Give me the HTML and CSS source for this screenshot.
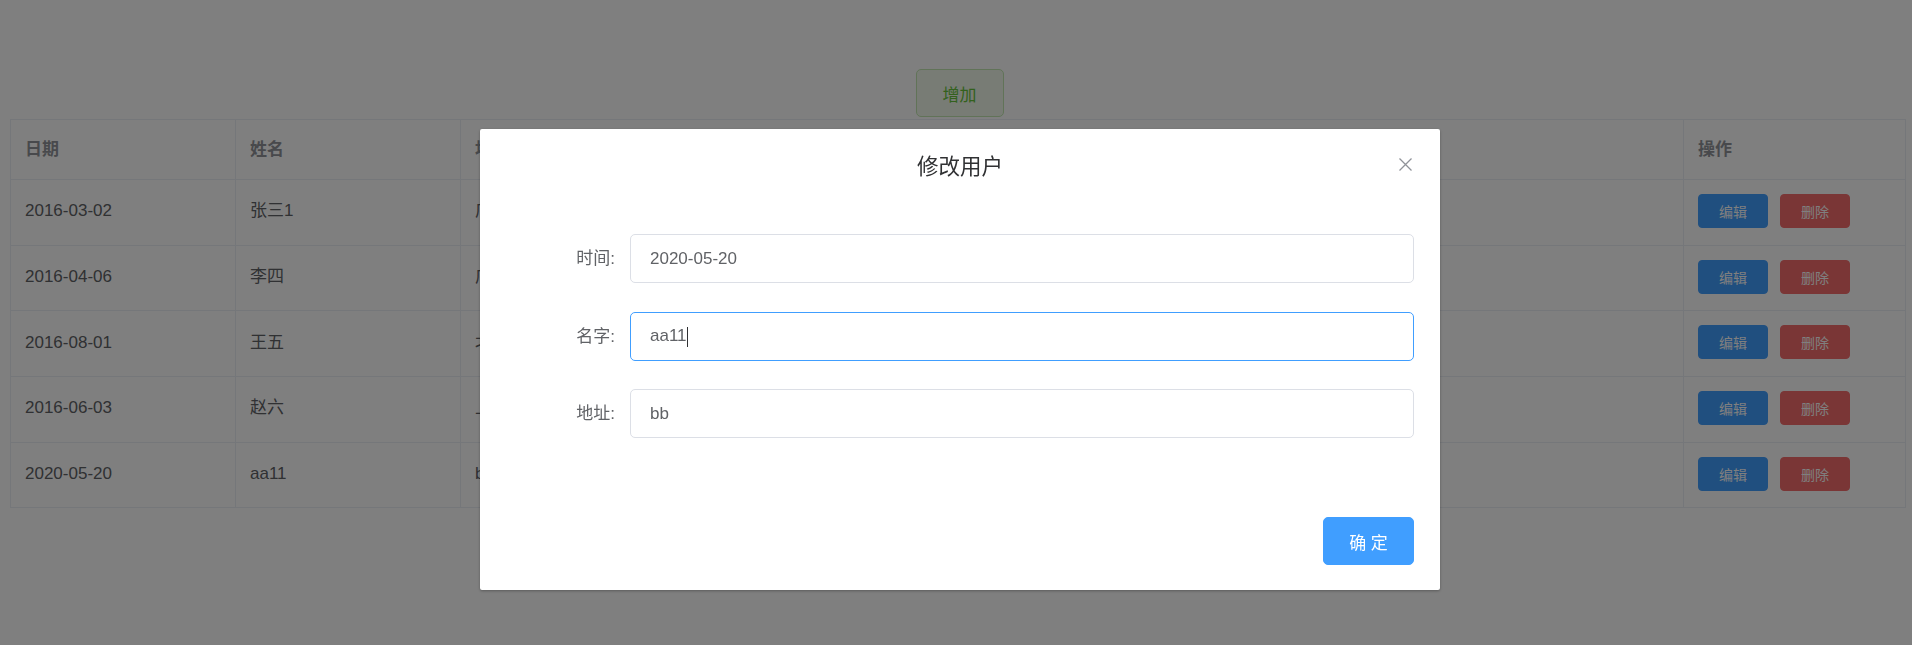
FILE: index.html
```html
<!DOCTYPE html>
<html lang="zh-CN">
<head>
    <meta charset="UTF-8">
    <meta name="viewport" content="width=device-width, initial-scale=1.0">
    <title>用户管理</title>
    <link rel="stylesheet" href="styles.css">
</head>
<body>

    <div class="page">
        <div class="toolbar">
            <button class="btn btn-add">增加</button>
        </div>

        <table class="user-table">
            <colgroup>
                <col class="col-date">
                <col class="col-name">
                <col>
                <col class="col-ops">
            </colgroup>
            <thead>
                <tr>
                    <th>日期</th>
                    <th>姓名</th>
                    <th>地址</th>
                    <th>操作</th>
                </tr>
            </thead>
            <tbody>
                <tr>
                    <td>2016-03-02</td>
                    <td>张三1</td>
                    <td>广州市天河区</td>
                    <td><button class="btn btn-mini btn-edit">编辑</button><button class="btn btn-mini btn-del">删除</button></td>
                </tr>
                <tr>
                    <td>2016-04-06</td>
                    <td>李四</td>
                    <td>广东省深圳市</td>
                    <td><button class="btn btn-mini btn-edit">编辑</button><button class="btn btn-mini btn-del">删除</button></td>
                </tr>
                <tr>
                    <td>2016-08-01</td>
                    <td>王五</td>
                    <td>北京市朝阳区</td>
                    <td><button class="btn btn-mini btn-edit">编辑</button><button class="btn btn-mini btn-del">删除</button></td>
                </tr>
                <tr>
                    <td>2016-06-03</td>
                    <td>赵六</td>
                    <td>上海市普陀区</td>
                    <td><button class="btn btn-mini btn-edit">编辑</button><button class="btn btn-mini btn-del">删除</button></td>
                </tr>
                <tr>
                    <td>2020-05-20</td>
                    <td>aa11</td>
                    <td>bb</td>
                    <td><button class="btn btn-mini btn-edit">编辑</button><button class="btn btn-mini btn-del">删除</button></td>
                </tr>
            </tbody>
        </table>
    </div>

    <!-- 修改用户弹窗 -->
    <div class="mask">
        <div class="dialog">
            <div class="dialog-header">
                <span class="dialog-title">修改用户</span>
                <button class="dialog-close" aria-label="关闭">
                    <svg width="13" height="13" viewBox="0 0 13 13">
                        <path d="M0.5 0.5 L12.5 12.5 M12.5 0.5 L0.5 12.5" stroke="#909399" stroke-width="1.3" fill="none"/>
                    </svg>
                </button>
            </div>
            <div class="dialog-body">
                <form class="form">
                    <div class="form-item">
                        <label class="form-label">时间:</label>
                        <div class="form-content">
                            <input class="input" type="text" value="2020-05-20">
                        </div>
                    </div>
                    <div class="form-item">
                        <label class="form-label">名字:</label>
                        <div class="form-content">
                            <input class="input is-focus" type="text" value="aa11">
                            <span class="caret"></span>
                        </div>
                    </div>
                    <div class="form-item">
                        <label class="form-label">地址:</label>
                        <div class="form-content">
                            <input class="input" type="text" value="bb">
                        </div>
                    </div>
                </form>
            </div>
            <div class="dialog-footer">
                <button class="btn btn-primary">确 定</button>
            </div>
        </div>
    </div>

</body>
</html>
```

FILE: styles.css
```css
* {
    box-sizing: border-box;
}
body {
    margin: 0;
    background-color: #fff;
    font-family: "Liberation Sans", "Noto Sans CJK SC", sans-serif;
    font-size: 17px;
    line-height: 23px;
    color: #606266;
}
.page {
    padding: 0 6px 0 10px;
}
.toolbar {
    padding-top: 69px;
    padding-left: 3px;
    text-align: center;
    line-height: normal;
}
.btn {
    font-family: inherit;
    cursor: pointer;
    border: 1px solid transparent;
    outline: none;
}
.btn-add {
    width: 88px;
    height: 48px;
    margin-bottom: 2px;
    font-size: 17px;
    color: #67c23a;
    background-color: #f0f9eb;
    border-color: #c2e7b0;
    border-radius: 5px;
}

/* tabela */
.user-table {
    width: 1896px;
    table-layout: fixed;
    border-collapse: separate;
    border-spacing: 0;
    border-top: 1px solid #ebeef5;
    border-left: 1px solid #ebeef5;
}
.col-date,
.col-name {
    width: 225px;
}
.col-ops {
    width: 222px;
}
.user-table th,
.user-table td {
    padding: 0 14px;
    text-align: left;
    vertical-align: middle;
    white-space: nowrap;
    overflow: hidden;
    border-right: 1px solid #ebeef5;
    border-bottom: 1px solid #ebeef5;
}
.user-table th {
    height: 60px;
    color: #909399;
    font-weight: bold;
}
.user-table td {
    height: 65.7px;
    padding-bottom: 3px;
}
.btn-mini {
    width: 70px;
    height: 34px;
    padding: 0;
    font-size: 14px;
    color: #fff;
    border-radius: 4px;
    vertical-align: middle;
}
.btn-mini + .btn-mini {
    margin-left: 12px;
}
.btn-edit {
    background-color: #409eff;
    border-color: #409eff;
}
.btn-del {
    background-color: #f56c6c;
    border-color: #f56c6c;
}

/*弹窗 */
.mask {
    position: fixed;
    top: 0;
    left: 0;
    right: 0;
    bottom: 0;
    background-color: rgba(0, 0, 0, 0.5);
    padding-top: 129px;
    padding-left: 480px;
}
.dialog {
    width: 960px;
    background-color: #fff;
    border-radius: 2px;
    box-shadow: 0 1px 3px rgba(0, 0, 0, 0.3);
}
.dialog-header {
    position: relative;
    padding: 24px 24px 12px;
    text-align: center;
}
.dialog-title {
    font-size: 21.5px;
    line-height: 29px;
    color: #303133;
}
.dialog-close {
    position: absolute;
    top: 25px;
    right: 25px;
    width: 20px;
    height: 20px;
    padding: 0;
    border: none;
    background: none;
    cursor: pointer;
    display: flex;
    align-items: center;
    justify-content: center;
}
.dialog-body {
    padding: 40px 26px 38.5px 24px;
}
.form-item {
    display: flex;
    align-items: center;
    margin-bottom: 28.5px;
}
.form-label {
    width: 126px;
    padding-right: 15px;
    text-align: right;
    line-height: 49px;
    color: #606266;
}
.form-content {
    position: relative;
    flex: 1;
}
.input {
    display: block;
    width: 100%;
    height: 49px;
    padding: 0 19px;
    font-family: inherit;
    font-size: 17px;
    color: #606266;
    border: 1px solid #dcdfe6;
    border-radius: 5px;
    outline: none;
}
.input.is-focus {
    border-color: #409eff;
}
/* cursor de texto no campo em foco */
.caret {
    position: absolute;
    left: 57px;
    top: 15px;
    width: 1px;
    height: 20px;
    background-color: #303133;
}
.dialog-footer {
    padding: 12px 26px 25px 24px;
    text-align: right;
    line-height: normal;
}
.btn-primary {
    width: 91px;
    height: 48px;
    padding: 0;
    font-size: 17px;
    color: #fff;
    background-color: #409eff;
    border-color: #409eff;
    border-radius: 5px;
}
```
